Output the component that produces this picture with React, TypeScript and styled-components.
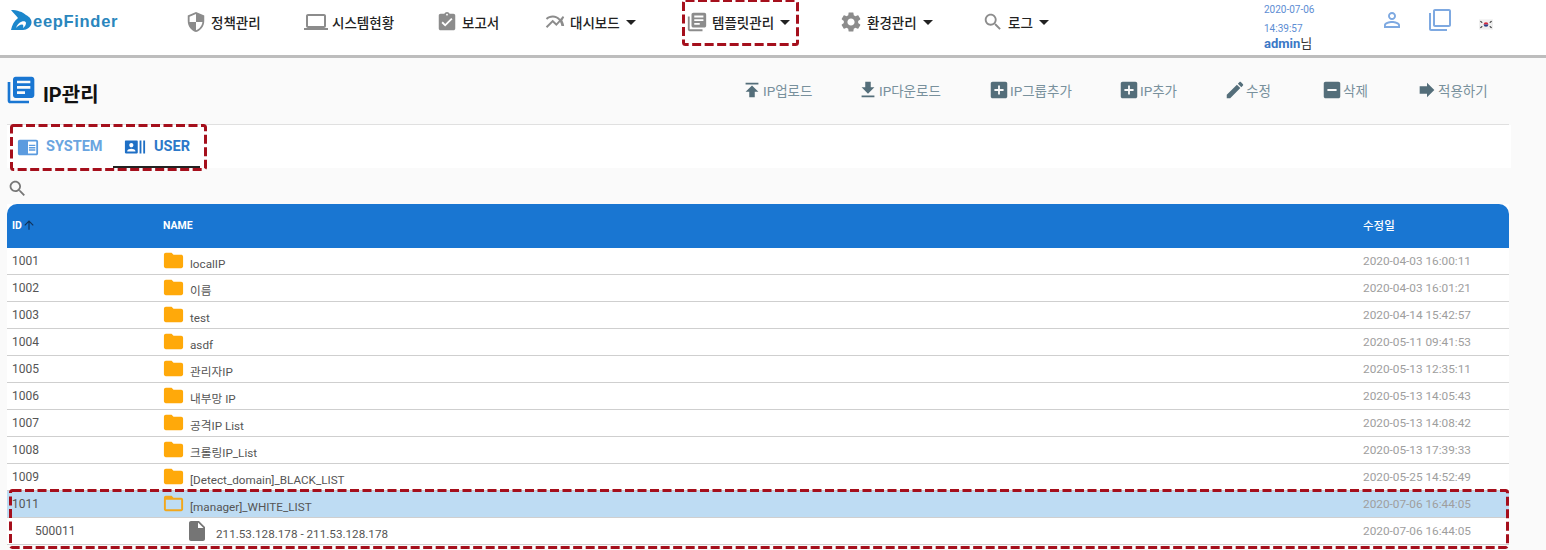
import React from "react";
import styled, { createGlobalStyle } from "styled-components";

const P = {
  security: "M12 1L3 5v6c0 5.55 3.84 10.74 9 12 5.16-1.26 9-6.45 9-12V5l-9-4zm0 10.99h7c-.53 4.12-3.28 7.79-7 8.94V12H5V6.3l7-3.11v8.8z",
  laptop: "M20 18c1.1 0 1.99-.9 1.99-2L22 6c0-1.1-.9-2-2-2H4c-1.1 0-2 .9-2 2v10c0 1.1.9 2 2 2H0v2h24v-2h-4zM4 6h16v10H4V6z",
  assign: "M19 3h-4.18C14.4 1.84 13.3 1 12 1c-1.3 0-2.4.84-2.82 2H5c-1.1 0-2 .9-2 2v14c0 1.1.9 2 2 2h14c1.1 0 2-.9 2-2V5c0-1.1-.9-2-2-2zm-7 0c.55 0 1 .45 1 1s-.45 1-1 1-1-.45-1-1 .45-1 1-1zm-2 14l-4-4 1.41-1.41L10 14.17l6.59-6.59L18 9l-8 8z",
  chart: "M22 6.92l-1.41-1.41-2.85 3.21C15.68 6.4 12.83 5 9.61 5 6.72 5 4.07 6.16 2 8l1.42 1.42C5.12 7.93 7.27 7 9.61 7c2.74 0 5.09 1.26 6.77 3.24l-2.88 3.24-4-4L2 16.99l1.5 1.5 6-6.01 4 4 4.05-4.55c.75 1.35 1.25 2.9 1.44 4.55H21.99c-.22-2.3-.95-4.39-2.04-6.14L22 6.92z",
  books: "M4 6H2v14c0 1.1.9 2 2 2h14v-2H4V6zm16-4H8c-1.1 0-2 .9-2 2v12c0 1.1.9 2 2 2h12c1.1 0 2-.9 2-2V4c0-1.1-.9-2-2-2zm-1 9H9V9h10v2zm-4 4H9v-2h6v2zm4-8H9V5h10v2z",
  gear: "M19.14 12.94c.04-.3.06-.61.06-.94 0-.32-.02-.64-.07-.94l2.03-1.58c.18-.14.23-.41.12-.61l-1.92-3.32c-.12-.22-.37-.29-.59-.22l-2.39.96c-.5-.38-1.03-.7-1.62-.94l-.36-2.54c-.04-.24-.24-.41-.48-.41h-3.84c-.24 0-.43.17-.47.41l-.36 2.54c-.59.24-1.13.57-1.62.94l-2.39-.96c-.22-.08-.47 0-.59.22L2.74 8.87c-.12.21-.08.47.12.61l2.03 1.58c-.05.3-.09.63-.09.94s.02.64.07.94l-2.03 1.58c-.18.14-.23.41-.12.61l1.92 3.32c.12.22.37.29.59.22l2.39-.96c.5.38 1.03.7 1.62.94l.36 2.54c.05.24.24.41.48.41h3.84c.24 0 .44-.17.47-.41l.36-2.54c.59-.24 1.13-.56 1.62-.94l2.39.96c.22.08.47 0 .59-.22l1.92-3.32c.12-.22.07-.47-.12-.61l-2.01-1.58zM12 15.6c-1.98 0-3.6-1.62-3.6-3.6s1.62-3.6 3.6-3.6 3.6 1.62 3.6 3.6-1.62 3.6-3.6 3.6z",
  search: "M15.5 14h-.79l-.28-.27C15.41 12.59 16 11.11 16 9.5 16 5.91 13.09 3 9.5 3S3 5.91 3 9.5 5.91 16 9.5 16c1.61 0 3.09-.59 4.23-1.57l.27.28v.79l5 4.99L20.49 19l-4.99-5zm-6 0C7.01 14 5 11.99 5 9.5S7.01 5 9.5 5 14 7.01 14 9.5 11.99 14 9.5 14z",
  person: "M12 5.9c1.16 0 2.1.94 2.1 2.1s-.94 2.1-2.1 2.1S9.9 9.16 9.9 8s.94-2.1 2.1-2.1m0 9c2.97 0 6.1 1.46 6.1 2.1v1.1H5.9V17c0-.64 3.13-2.1 6.1-2.1M12 4C9.79 4 8 5.79 8 8s1.79 4 4 4 4-1.79 4-4-1.79-4-4-4zm0 9c-2.67 0-8 1.34-8 4v3h16v-3c0-2.66-5.33-4-8-4z",
  copy: "M3 5H1v16c0 1.1.9 2 2 2h16v-2H3V5zm18-4H7c-1.1 0-2 .9-2 2v14c0 1.1.9 2 2 2h14c1.1 0 2-.9 2-2V3c0-1.1-.9-2-2-2zm0 16H7V3h14v14z",
  publish: "M5 4v2h14V4H5zm0 10h4v6h6v-6h4l-7-7-7 7z",
  getApp: "M19 9h-4V3H9v6H5l7 7 7-7zM5 18v2h14v-2H5z",
  addBox: "M19 3H5c-1.11 0-2 .9-2 2v14c0 1.1.89 2 2 2h14c1.1 0 2-.9 2-2V5c0-1.1-.9-2-2-2zm-2 10h-4v4h-2v-4H7v-2h4V7h2v4h4v2z",
  edit: "M3 17.25V21h3.75L17.81 9.94l-3.75-3.75L3 17.25zM20.71 7.04c.39-.39.39-1.02 0-1.41l-2.34-2.34c-.39-.39-1.02-.39-1.41 0l-1.83 1.83 3.75 3.75 1.83-1.83z",
  minusBox: "M19 3H5c-1.1 0-2 .9-2 2v14c0 1.1.9 2 2 2h14c1.1 0 2-.9 2-2V5c0-1.1-.9-2-2-2zm-2 10H7v-2h10v2z",
  forward: "M12 8V4l8 8-8 8v-4H4V8z",
  reader: "M13 12h7v1.5h-7zm0-2.5h7V11h-7zm0 5h7V16h-7zM21 4H3c-1.1 0-2 .9-2 2v13c0 1.1.9 2 2 2h18c1.1 0 2-.9 2-2V6c0-1.1-.9-2-2-2zm0 15h-9V6h9v13z",
  actors: "M21 5v14h2V5h-2zm-4 14h2V5h-2v14zM14 5H2c-.55 0-1 .45-1 1v12c0 .55.45 1 1 1h12c.55 0 1-.45 1-1V6c0-.55-.45-1-1-1zM8 7.75c1.24 0 2.25 1.01 2.25 2.25S9.24 12.25 8 12.25 5.75 11.24 5.75 10 6.76 7.75 8 7.75zM12.5 17h-9v-.75c0-1.5 3-2.25 4.5-2.25s4.5.75 4.5 2.25V17z",
  folder: "M10 4H4c-1.1 0-1.99.9-1.99 2L2 18c0 1.1.9 2 2 2h16c1.1 0 2-.9 2-2V8c0-1.1-.9-2-2-2h-8l-2-2z",
  folderOpen: "M20 6h-8l-2-2H4c-1.1 0-1.99.9-1.99 2L2 18c0 1.1.9 2 2 2h16c1.1 0 2-.9 2-2V8c0-1.1-.9-2-2-2zm0 12H4V8h16v10z",
  file: "M6 2c-1.1 0-1.99.9-1.99 2L4 20c0 1.1.89 2 1.99 2H18c1.1 0 2-.9 2-2V8l-6-6H6zm7 7V3.5L18.5 9H13z",
  up: "M4 12l1.41 1.41L11 7.83V20h2V7.83l5.58 5.59L20 12l-8-8-8 8z",
};

const Global = createGlobalStyle`
  html, body { margin: 0; padding: 0; background: #fafafa; }
  body { height: 550px; overflow: hidden; font-family: Roboto, "Noto Sans CJK KR", sans-serif; }
  * { box-sizing: border-box; }
`;

const Icon = ({ d, size, color }: { d: string; size: number; color: string }) => (
  <svg width={size} height={size} viewBox="0 0 24 24" fill={color} style={{ flex: "none", display: "block" }}>
    <path d={d} />
  </svg>
);

const Page = styled.div`
  position: relative;
  width: 1546px;
  height: 550px;
  overflow: hidden;
`;

const Header = styled.header`
  display: flex;
  align-items: flex-start;
  height: 58px;
  background: #fff;
  border-bottom: 3px solid #bdbdbd;
`;

const LogoWrap = styled.div`
  display: flex;
  align-items: center;
  width: 187px;
  height: 40px;
  padding-left: 11px;
`;

const LogoText = styled.span`
  margin-left: 1px;
  padding-top: 3px;
  font: bold 16.5px "Liberation Sans", Arial, sans-serif;
  letter-spacing: 0.7px;
  color: #2a86bd;
`;

const Nav = styled.nav`
  display: flex;
  width: 1077px;
`;

const NavItem = styled.div<{ $w: number }>`
  display: flex;
  align-items: center;
  gap: 4px;
  width: ${(p) => p.$w}px;
  height: 44px;
  font-size: 13.5px;
  font-weight: 500;
  color: #222;
  white-space: nowrap;
`;

const NavIconSlot = styled.span<{ $shift: number }>`
  margin-left: ${(p) => p.$shift}px;
`;

const Caret = styled.span`
  width: 0;
  height: 0;
  margin-left: 2px;
  border-left: 5px solid transparent;
  border-right: 5px solid transparent;
  border-top: 5px solid #222;
`;

const Clock = styled.div`
  width: 116px;
  font-size: 10px;
  line-height: 19px;
  color: #5d8dd3;
`;

const ClockUser = styled.div`
  margin-top: -2px;
  font-size: 13px;
  line-height: 16px;
  font-weight: 700;
  color: #3b78c6;
`;

const ClockSuffix = styled.span`
  font-weight: 400;
  color: #333;
`;

const HeaderIcons = styled.div`
  display: flex;
  align-items: center;
  height: 40px;
`;

const HeaderIconCell = styled.div<{ $w: number }>`
  display: flex;
  width: ${(p) => p.$w}px;
`;

const TitleRow = styled.div`
  display: flex;
  align-items: center;
  height: 67px;
  margin: 0 37px 0 7px;
  padding-bottom: 3px;
  border-bottom: 1px solid #e0e0e0;
`;

const PageTitle = styled.h1`
  display: flex;
  align-items: center;
  gap: 6px;
  margin: 0 0 0 -2px;
  font-size: 20px;
  font-weight: 700;
  color: #111;
`;

const TitleText = styled.span`
  padding-top: 7px;
`;

const Toolbar = styled.div`
  display: flex;
  margin-left: auto;
`;

const ToolButton = styled.div<{ $w: number }>`
  display: flex;
  align-items: center;
  width: ${(p) => p.$w}px;
  font-size: 13.5px;
  color: #78909c;
  white-space: nowrap;
`;

const TabBar = styled.div`
  display: flex;
  align-items: stretch;
  height: 43px;
  margin: 0 35px 0 7px;
  background: #fff;
`;

const Tab = styled.div<{ $active?: boolean; $w: number }>`
  display: flex;
  align-items: center;
  gap: ${(p) => (p.$active ? 8 : 7)}px;
  width: ${(p) => p.$w}px;
  padding: 2px 0 0 ${(p) => (p.$active ? 11 : 10)}px;
  font-size: 14.5px;
  font-weight: 700;
  color: ${(p) => (p.$active ? "#2c78c9" : "#6aa5e0")};
  border-bottom: 2px solid ${(p) => (p.$active ? "#222" : "transparent")};
`;

const SearchRow = styled.div`
  display: flex;
  align-items: center;
  height: 36px;
  padding: 4px 0 0 7px;
`;

const Table = styled.div`
  width: 1502px;
  margin-left: 7px;
  background: #fff;
`;

const HeadRow = styled.div`
  display: grid;
  grid-template-columns: 156px 1200px 146px;
  align-items: center;
  height: 44px;
  padding-bottom: 2px;
  background: #1976d2;
  border-radius: 10px 10px 0 0;
  font-size: 10.5px;
  font-weight: 700;
  color: #fff;
`;

const HeadCell = styled.div`
  display: flex;
  align-items: center;
  padding-left: 5px;
`;

const NameHead = styled(HeadCell)`
  padding-left: 0;
`;

const DateHead = styled(HeadCell)`
  padding-left: 0;
  font-size: 11.5px;
  font-weight: 500;
`;

const Row = styled.div<{ $selected?: boolean }>`
  display: grid;
  grid-template-columns: 156px 1200px 146px;
  height: 27px;
  background: ${(p) => (p.$selected ? "#bedcf3" : "#fff")};
  border-bottom: 1px solid #cfcfcf;
  font-size: 12px;
  color: #555;
`;

const IdCell = styled.div<{ $child?: boolean }>`
  padding: 6px 0 0 ${(p) => (p.$child ? 28 : 5)}px;
  line-height: 15px;
`;

const NameCell = styled.div<{ $child?: boolean }>`
  display: flex;
  align-items: flex-start;
  margin-left: ${(p) => (p.$child ? 22 : -1)}px;
  gap: ${(p) => (p.$child ? 7 : 5)}px;
  padding-top: 1px;
`;

const NameText = styled.span`
  padding-top: 8px;
  font-size: 11.7px;
  line-height: 15px;
  white-space: nowrap;
`;

const DateCell = styled.div`
  padding-top: 6px;
  font-size: 11.8px;
  line-height: 15px;
  color: #9e9e9e;
`;

const Marker = styled.svg<{ $x: number; $y: number; $w: number; $h: number }>`
  position: absolute;
  left: ${(p) => p.$x}px;
  top: ${(p) => p.$y}px;
  width: ${(p) => p.$w}px;
  height: ${(p) => p.$h}px;
  pointer-events: none;
`;

const Dashed = ({ x, y, w, h }: { x: number; y: number; w: number; h: number }) => (
  <Marker $x={x} $y={y} $w={w} $h={h} viewBox={`0 0 ${w} ${h}`}>
    <rect x="1.5" y="1.5" width={w - 3} height={h - 3} rx="2" fill="none" stroke="#a50f1c" strokeWidth="3" strokeDasharray="9 3.5" />
  </Marker>
);

const Logo = () => (
  <svg width="21" height="20" viewBox="0 0 21 20" style={{ flex: "none" }}>
    <path d="M0 0 C6 0 12 2 15 5 C19 7 21 10 20.5 13 C20 17 16 20 12 20 L0 20 C1 15 3 11 7 8 C5 5 2 3 0 0 Z" fill="#1b87cc" />
    <path d="M5 18 C6 15 8 12.5 11 11.5 C13 11 15 11.5 15 13 C15 15 13.5 17 12 18 C12.5 16 12.5 14.5 11 14.5 C9 14.5 7 16 5 18 Z" fill="#fff" />
  </svg>
);

const Flag = () => (
  <svg width="14" height="11" viewBox="0 0 15 11" style={{ display: "block", marginTop: 8, marginLeft: 1 }}>
    <rect width="15" height="11" fill="#efefef" />
    <path d="M5 5.5a2.5 2.5 0 0 1 5 0z" fill="#d2273c" />
    <path d="M5 5.5a2.5 2.5 0 0 0 5 0z" fill="#2a3f86" />
    <path d="M1.5 2l2 1.5M1.5 9l2-1.5M13.5 2l-2 1.5M13.5 9l-2-1.5" stroke="#333" strokeWidth="1.2" />
  </svg>
);

const navItems = [
  { icon: P.security, label: "정책관리", w: 117, size: 22, shift: -2 },
  { icon: P.laptop, label: "시스템현황", w: 134, size: 24, shift: 0 },
  { icon: P.assign, label: "보고서", w: 107, size: 22, shift: -2 },
  { icon: P.chart, label: "대시보드", w: 141, size: 22, caret: true, shift: -1 },
  { icon: P.books, label: "템플릿관리", w: 154, size: 22, caret: true, shift: 0 },
  { icon: P.gear, label: "환경관리", w: 142, size: 24, caret: true, shift: -1 },
  { icon: P.search, label: "로그", w: 282, size: 22, caret: true, shift: 0 },
];

const tools = [
  { icon: P.publish, label: "IP업로드", w: 116 },
  { icon: P.getApp, label: "IP다운로드", w: 131 },
  { icon: P.addBox, label: "IP그룹추가", w: 130 },
  { icon: P.addBox, label: "IP추가", w: 106 },
  { icon: P.edit, label: "수정", w: 97 },
  { icon: P.minusBox, label: "삭제", w: 95 },
  { icon: P.forward, label: "적용하기", w: 93 },
];

const rows = [
  ["1001", "localIP", "2020-04-03 16:00:11"],
  ["1002", "이름", "2020-04-03 16:01:21"],
  ["1003", "test", "2020-04-14 15:42:57"],
  ["1004", "asdf", "2020-05-11 09:41:53"],
  ["1005", "관리자IP", "2020-05-13 12:35:11"],
  ["1006", "내부망 IP", "2020-05-13 14:05:43"],
  ["1007", "공격IP List", "2020-05-13 14:08:42"],
  ["1008", "크롤링IP_List", "2020-05-13 17:39:33"],
  ["1009", "[Detect_domain]_BLACK_LIST", "2020-05-25 14:52:49"],
];

export default function App() {
  return (
    <Page>
      <Global />
      <Header>
        <LogoWrap>
          <Logo />
          <LogoText>eepFinder</LogoText>
        </LogoWrap>
        <Nav>
          {navItems.map((n) => (
            <NavItem key={n.label} $w={n.w}>
              <NavIconSlot $shift={n.shift}>
                <Icon d={n.icon} size={n.size} color="#8c8c8c" />
              </NavIconSlot>
              {n.label}
              {n.caret && <Caret />}
            </NavItem>
          ))}
        </Nav>
        <Clock>
          <div>2020-07-06</div>
          <div>14:39:57</div>
          <ClockUser>
            admin<ClockSuffix>님</ClockSuffix>
          </ClockUser>
        </Clock>
        <HeaderIcons>
          <HeaderIconCell $w={48}><Icon d={P.person} size={24} color="#7ea9e1" /></HeaderIconCell>
          <HeaderIconCell $w={50}><Icon d={P.copy} size={24} color="#7ea9e1" /></HeaderIconCell>
          <HeaderIconCell $w={20}><Flag /></HeaderIconCell>
        </HeaderIcons>
      </Header>

      <TitleRow>
        <PageTitle>
          <Icon d={P.books} size={32} color="#1976d2" />
          <TitleText>IP관리</TitleText>
        </PageTitle>
        <Toolbar>
          {tools.map((t) => (
            <ToolButton key={t.label} $w={t.w}>
              <Icon d={t.icon} size={22} color="#546e7a" />
              {t.label}
            </ToolButton>
          ))}
        </Toolbar>
      </TitleRow>

      <TabBar>
        <Tab $w={106}>
          <Icon d={P.reader} size={22} color="#5b9bdf" />
          SYSTEM
        </Tab>
        <Tab $active $w={87}>
          <Icon d={P.actors} size={22} color="#1e6fc5" />
          USER
        </Tab>
      </TabBar>

      <SearchRow>
        <Icon d={P.search} size={21} color="#777" />
      </SearchRow>

      <Table>
        <HeadRow>
          <HeadCell>
            ID
            <Icon d={P.up} size={14} color="#10325a" />
          </HeadCell>
          <NameHead>NAME</NameHead>
          <DateHead>수정일</DateHead>
        </HeadRow>
        {rows.map(([id, name, date]) => (
          <Row key={id}>
            <IdCell>{id}</IdCell>
            <NameCell>
              <Icon d={P.folder} size={23} color="#ffa90a" />
              <NameText>{name}</NameText>
            </NameCell>
            <DateCell>{date}</DateCell>
          </Row>
        ))}
        <Row $selected>
          <IdCell>1011</IdCell>
          <NameCell>
            <Icon d={P.folderOpen} size={23} color="#f2a71b" />
            <NameText>[manager]_WHITE_LIST</NameText>
          </NameCell>
          <DateCell>2020-07-06 16:44:05</DateCell>
        </Row>
        <Row>
          <IdCell $child>500011</IdCell>
          <NameCell $child>
            <Icon d={P.file} size={24} color="#757575" />
            <NameText>211.53.128.178 - 211.53.128.178</NameText>
          </NameCell>
          <DateCell>2020-07-06 16:44:05</DateCell>
        </Row>
      </Table>

      <Dashed x={682} y={-1} w={117} h={47} />
      <Dashed x={10} y={124} w={197} h={47} />
      <Dashed x={9} y={489} w={1500} h={60} />
    </Page>
  );
}
